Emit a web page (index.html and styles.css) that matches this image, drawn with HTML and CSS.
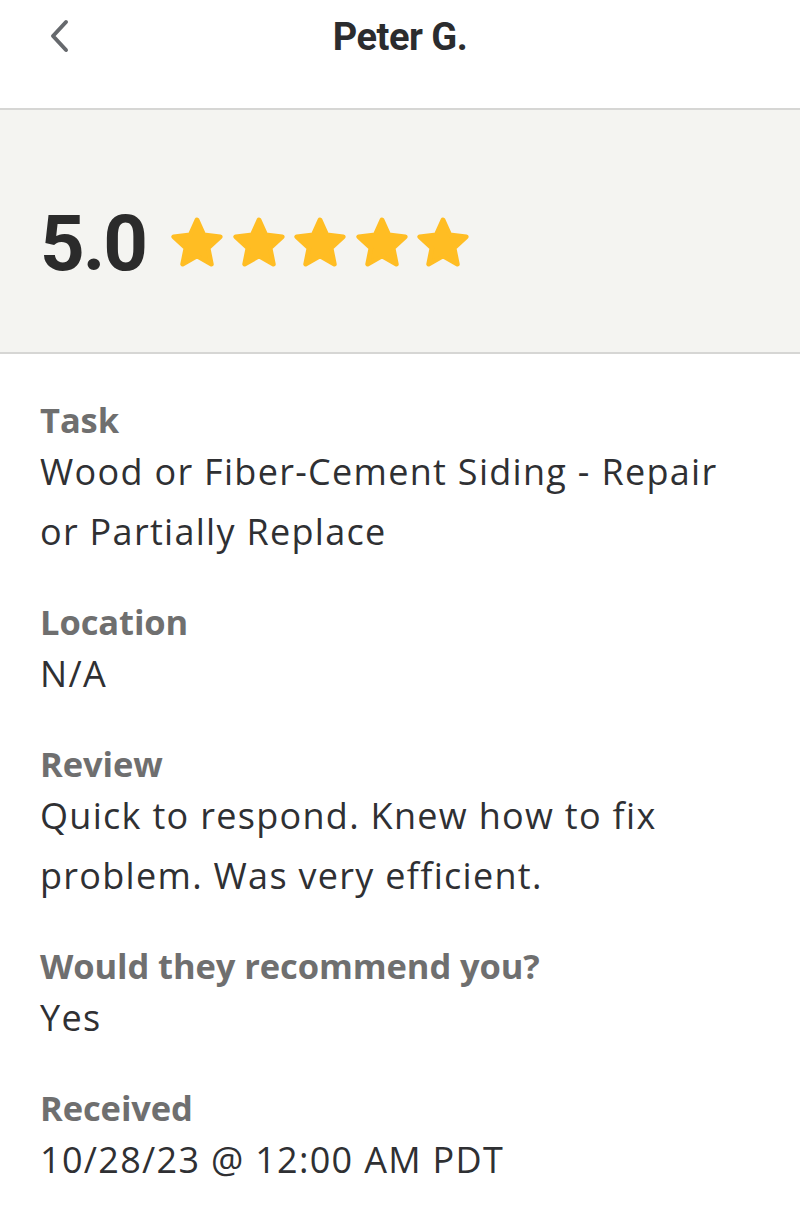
FILE: index.html
```html
<!DOCTYPE html>
<html lang="en">
<head>
<meta charset="utf-8">
<title>Peter G.</title>
<link rel="stylesheet" href="styles.css">
</head>
<body>
<header class="topbar">
  <button class="back" aria-label="Back">
    <svg width="24" height="34" viewBox="0 0 24 34"><path d="M18 3 L5 17 L18 31" fill="none" stroke="#66696d" stroke-width="4" stroke-linecap="round" stroke-linejoin="round"/></svg>
  </button>
  <h1 class="title">Peter G.</h1>
</header>
<section class="rating">
  <span class="score">5.0</span>
  <div class="stars">
    <svg class="star" viewBox="0 0 24 24"><path d="M12 2.5 L14.94 8.955 L21.99 9.755 L16.76 14.55 L18.17 21.49 L12 18 L5.83 21.49 L7.245 14.55 L2.01 9.755 L9.06 8.955 Z"/></svg>
    <svg class="star" viewBox="0 0 24 24"><path d="M12 2.5 L14.94 8.955 L21.99 9.755 L16.76 14.55 L18.17 21.49 L12 18 L5.83 21.49 L7.245 14.55 L2.01 9.755 L9.06 8.955 Z"/></svg>
    <svg class="star" viewBox="0 0 24 24"><path d="M12 2.5 L14.94 8.955 L21.99 9.755 L16.76 14.55 L18.17 21.49 L12 18 L5.83 21.49 L7.245 14.55 L2.01 9.755 L9.06 8.955 Z"/></svg>
    <svg class="star" viewBox="0 0 24 24"><path d="M12 2.5 L14.94 8.955 L21.99 9.755 L16.76 14.55 L18.17 21.49 L12 18 L5.83 21.49 L7.245 14.55 L2.01 9.755 L9.06 8.955 Z"/></svg>
    <svg class="star" viewBox="0 0 24 24"><path d="M12 2.5 L14.94 8.955 L21.99 9.755 L16.76 14.55 L18.17 21.49 L12 18 L5.83 21.49 L7.245 14.55 L2.01 9.755 L9.06 8.955 Z"/></svg>
  </div>
</section>
<main class="details">
  <div class="field">
    <div class="label">Task</div>
    <div class="value">Wood or Fiber-Cement Siding - Repair or Partially Replace</div>
  </div>
  <div class="field">
    <div class="label">Location</div>
    <div class="value">N/A</div>
  </div>
  <div class="field">
    <div class="label">Review</div>
    <div class="value">Quick to respond. Knew how to fix problem. Was very efficient.</div>
  </div>
  <div class="field">
    <div class="label">Would they recommend you?</div>
    <div class="value">Yes</div>
  </div>
  <div class="field">
    <div class="label">Received</div>
    <div class="value">10/28/23 @ 12:00 AM PDT</div>
  </div>
</main>
</body>
</html>
```

FILE: styles.css
```css
* { box-sizing: border-box; }
html, body {
  margin: 0;
  padding: 0;
  background: #ffffff;
  font-family: "Open Sans", "Liberation Sans", sans-serif;
  color: #2f3033;
}
.topbar {
  position: relative;
  height: 110px;
  display: flex;
  align-items: flex-start;
  justify-content: center;
  border-bottom: 2px solid #d6d6d4;
}
.back {
  position: absolute;
  left: 48px;
  top: 19px;
  width: 24px;
  height: 34px;
  padding: 0;
  border: 0;
  background: none;
  display: flex;
}
.title {
  margin: 14px 0 0;
  font-family: Roboto, "Liberation Sans", sans-serif;
  font-size: 38px;
  line-height: 46px;
  font-weight: 700;
  letter-spacing: -0.5px;
  color: #2b2c2e;
}
.rating {
  height: 244px;
  background: #f4f4f1;
  border-bottom: 2px solid #d6d6d4;
  display: flex;
  align-items: center;
  padding: 22px 40px 0;
}
.score {
  font-family: Roboto, "Liberation Sans", sans-serif;
  font-size: 78px;
  font-weight: 700;
  letter-spacing: -2px;
  color: #2b2b2b;
  line-height: 1;
  margin-right: 23px;
  margin-top: 4px;
}
.stars {
  display: flex;
  gap: 5.5px;
}
.star {
  width: 56px;
  height: 56px;
  fill: #ffbd23;
  stroke: #ffbd23;
  stroke-width: 2;
  stroke-linejoin: round;
}
.details {
  padding: 44px 56px 0 40px;
  display: flex;
  flex-direction: column;
  gap: 38px;
}
.label {
  font-size: 34.5px;
  line-height: 44px;
  font-weight: 700;
  color: #6f6f6f;
  letter-spacing: -0.1px;
}
.value {
  font-size: 36px;
  line-height: 60px;
  color: #2f3033;
  letter-spacing: 1.3px;
}
```
